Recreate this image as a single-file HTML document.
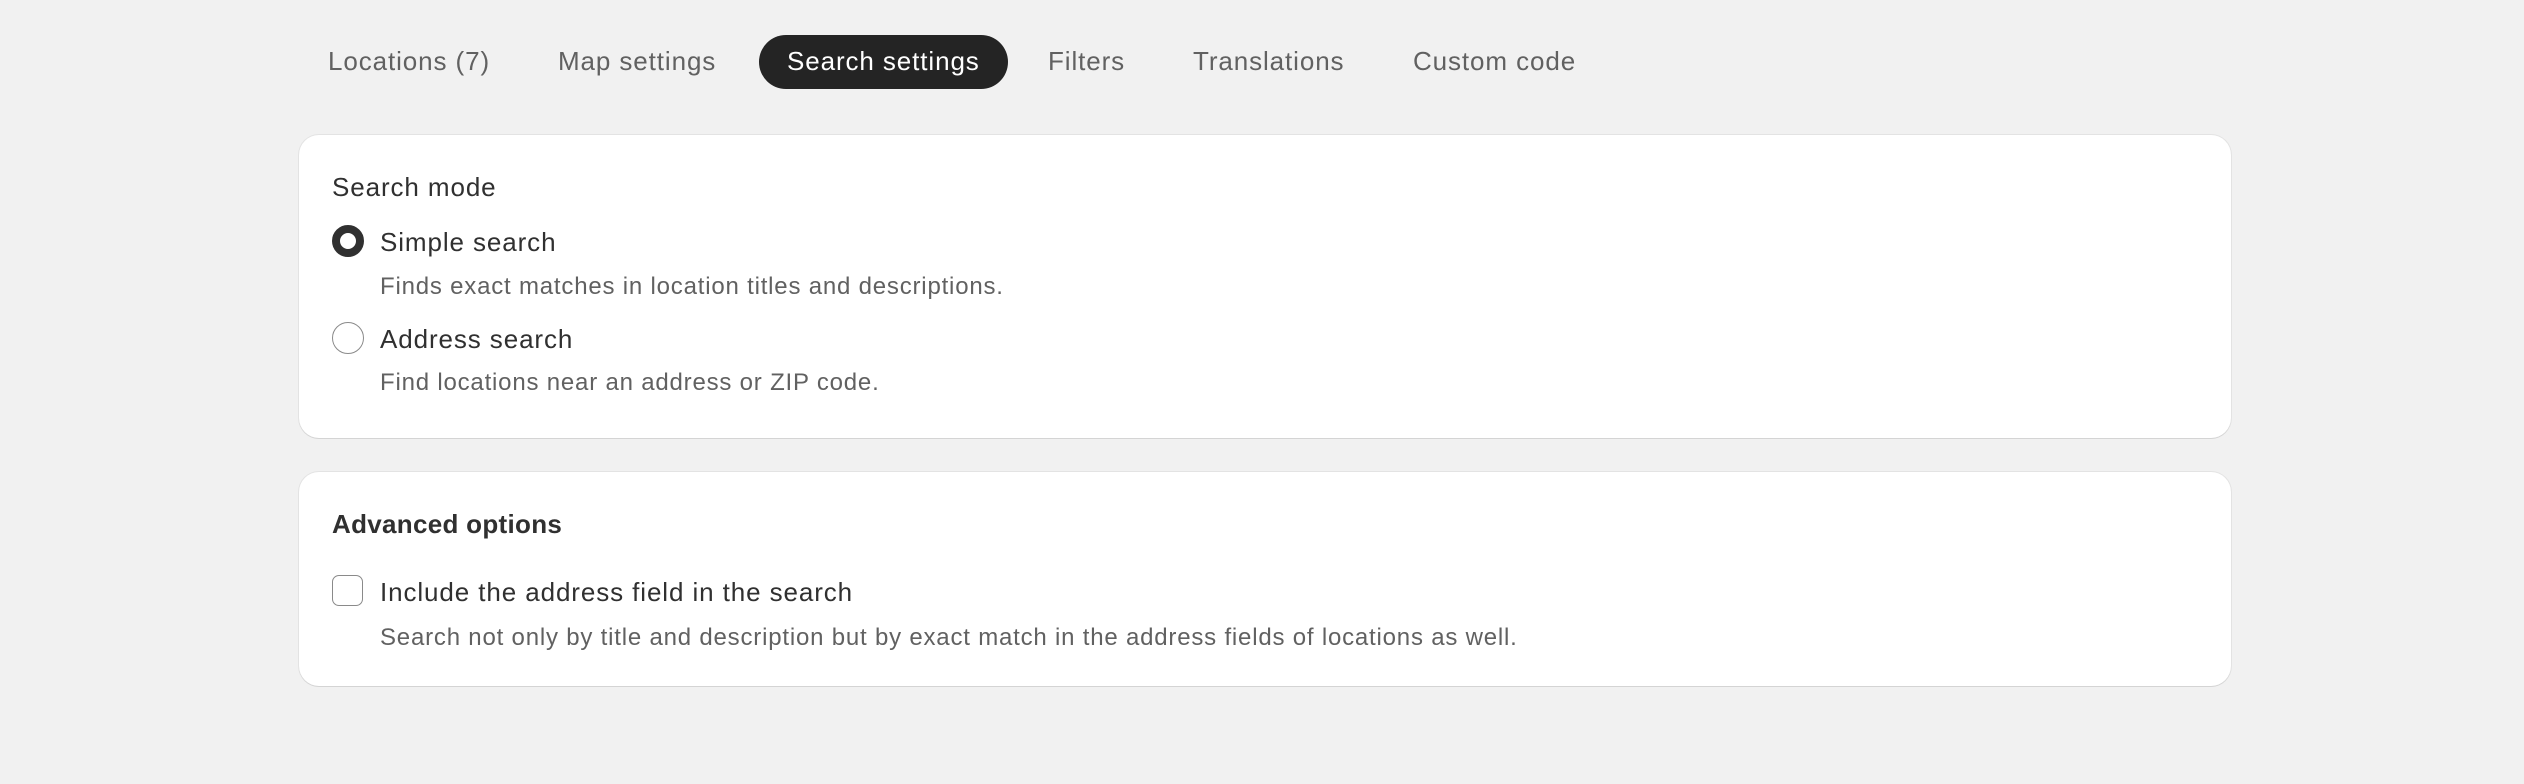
<!DOCTYPE html>
<html><head><style>
body{margin:0;width:2524px;height:784px;background:#f1f1f1;font-family:"Liberation Sans",sans-serif;position:relative;overflow:hidden;color:#303030}
.t{position:absolute;font-size:26px;white-space:nowrap;line-height:1;letter-spacing:0.9px}
.tab{color:#616161;top:48px}
.pill{position:absolute;left:759px;top:35px;width:249px;height:54px;border-radius:27px;background:#242424}
.card{position:absolute;left:299px;width:1932px;background:#fff;border-radius:20px;box-shadow:0 1px 0 #d4d4d4,0 0 0 1px #e3e3e3}
.d{color:#616161;font-size:24px;letter-spacing:0.8px}
.radio{position:absolute;width:28px;height:28px;border-radius:50%;border:2px solid #8a8a8a;background:#fff}
</style></head><body>
<div class="pill"></div>
<div class="t tab" style="left:328px">Locations (7)</div>
<div class="t tab" style="left:558px">Map settings</div>
<div class="t" style="left:787px;top:48px;color:#fff">Search settings</div>
<div class="t tab" style="left:1048px">Filters</div>
<div class="t tab" style="left:1193px">Translations</div>
<div class="t tab" style="left:1413px">Custom code</div>

<div class="card" style="top:135px;height:303px"></div>
<div class="t" style="left:332px;top:174px">Search mode</div>
<div class="radio" style="left:332px;top:225px;width:16px;height:16px;border:8px solid #303030"></div>
<div class="t" style="left:380px;top:229px">Simple search</div>
<div class="t d" style="left:380px;top:275px">Finds exact matches in location titles and descriptions.</div>
<div class="radio" style="left:332px;top:322px;border:1px solid #8a8a8a;width:30px;height:30px"></div>
<div class="t" style="left:380px;top:326px">Address search</div>
<div class="t d" style="left:380px;top:371px">Find locations near an address or ZIP code.</div>

<div class="card" style="top:472px;height:214px"></div>
<div class="t" style="left:332px;top:511px;font-weight:bold;letter-spacing:0.3px">Advanced options</div>
<div style="position:absolute;left:332px;top:575px;width:29px;height:29px;border:1.5px solid #8a8a8a;border-radius:7px"></div>
<div class="t" style="left:380px;top:579px">Include the address field in the search</div>
<div class="t d" style="left:380px;top:626px">Search not only by title and description but by exact match in the address fields of locations as well.</div>
</body></html>
